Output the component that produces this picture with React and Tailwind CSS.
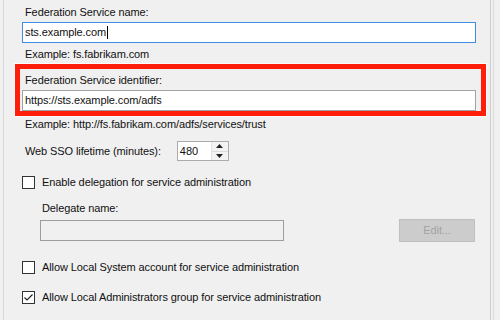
export default function App() {
  const font = "font-['Liberation_Sans',Arial,sans-serif]";
  return (
    <div className={`w-[500px] h-[320px] bg-[#f0f0f0] overflow-hidden flex text-[11px] leading-[13px] tracking-[-0.1px] text-[#111] ${font}`}>
      <div className="w-[3px] shrink-0" />
      <div className="w-[488px] shrink-0 h-full border-l border-l-[#d9d9d9] border-r border-r-[#cdcdcd] pl-[11px] flex flex-col">
        <div className="mt-[6px] ml-[10px]">Federation Service name:</div>
        <div className="mt-[3px] ml-[7px] w-[454px] h-[21px] bg-white border border-[#3d8ee0] flex items-center pl-[2px]">
          <span>sts.example.com</span>
          <span className="w-px h-[13px] bg-black ml-px" />
        </div>
        <div className="mt-[5px] ml-[10px]">Example: fs.fabrikam.com</div>
        <div className="mt-[3px] w-[471px] h-[52px] border-[5px] border-[#ff1e0a] shadow-[0_0_0_1px_#fbfbfb] flex flex-col">
          <div className="mt-[5px] ml-[5px]">Federation Service identifier:</div>
          <div className="mt-[3px] ml-[2px] w-[454px] h-[21px] bg-white border border-[#a2a2a2] flex items-center pl-[2px]">
            https://sts.example.com/adfs
          </div>
        </div>
        <div className="mt-[2px] ml-[10px]">Example: http://fs.fabrikam.com/adfs/services/trust</div>
        <div className="mt-[10px] ml-[10px] flex items-center h-[20px]">
          <span>Web SSO lifetime (minutes):</span>
          <div className="ml-[16px] w-[52px] h-[20px] bg-white border border-[#acacac] flex">
            <div className="flex-1 flex items-center pl-[2px]">480</div>
            <div className="w-[17px] h-full flex flex-col border-l border-[#e3e3e3] bg-[#f3f3f3]">
              <div className="flex-1 flex items-center justify-center border-b border-[#dcdcdc]">
                <svg width="7" height="4" viewBox="0 0 7 4"><path d="M0 4 L3.5 0 L7 4 Z" fill="#222" /></svg>
              </div>
              <div className="flex-1 flex items-center justify-center">
                <svg width="7" height="4" viewBox="0 0 7 4"><path d="M0 0 L3.5 4 L7 0 Z" fill="#222" /></svg>
              </div>
            </div>
          </div>
        </div>
        <div className="mt-[15px] ml-[7px] flex items-center">
          <div className="w-[13px] h-[13px] bg-white border border-[#333]" />
          <span className="ml-[7px]">Enable delegation for service administration</span>
        </div>
        <div className="mt-[13px] ml-[27px]">Delegate name:</div>
        <div className="mt-[4px] ml-[25px] flex items-center">
          <div className="w-[244px] h-[21px] border border-[#9d9d9d] bg-[#f0f0f0]" />
          <div className="ml-[115px] w-[76px] h-[23px] bg-[#cccccc] border border-[#bfbfbf] flex items-center justify-center text-[#a3a3a3]">
            Edit...
          </div>
        </div>
        <div className="mt-[19px] ml-[7px] flex items-center">
          <div className="w-[13px] h-[13px] bg-white border border-[#333]" />
          <span className="ml-[7px]">Allow Local System account for service administration</span>
        </div>
        <div className="mt-[17px] ml-[7px] flex items-center">
          <div className="w-[13px] h-[13px] bg-white border border-[#333] flex items-center justify-center">
            <svg width="11" height="11" viewBox="0 0 11 11">
              <path d="M1.5 5.5 L4 8 L9.5 2.5" stroke="#222" strokeWidth="1.2" fill="none" />
            </svg>
          </div>
          <span className="ml-[7px]">Allow Local Administrators group for service administration</span>
        </div>
      </div>
      <div className="w-[2px] shrink-0" />
      <div className="w-px shrink-0 h-full bg-[#dcdcdc]" />
    </div>
  );
}
